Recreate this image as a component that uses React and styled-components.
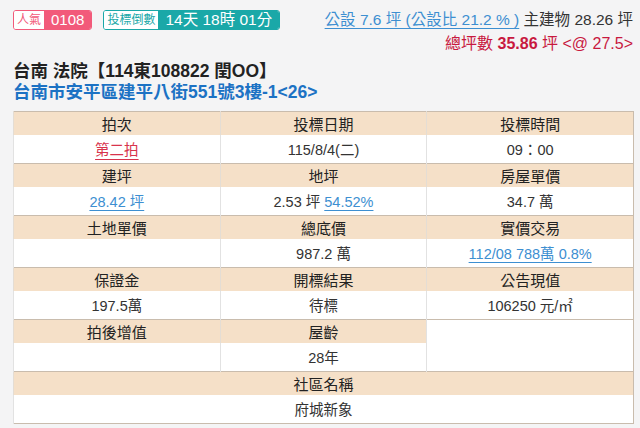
import React from 'react';
import styled, { createGlobalStyle } from 'styled-components';

const GlobalStyle = createGlobalStyle`
    body {
        margin: 0;
        background: #f4f4f5;
        font-family: "Liberation Sans", "Noto Sans CJK TC", sans-serif;
        color: #333;
    }
`;

const Page = styled.div`
    width: 640px;
    height: 428px;
    overflow: hidden;
    padding: 0 7px 0 13px;
    box-sizing: border-box;
`;

const TopBar = styled.div`
    display: flex;
    justify-content: space-between;
    align-items: flex-start;
    padding-top: 9px;
`;

const Badges = styled.div`
    display: flex;
    gap: 11px;
    padding-top: 1px;
`;

const Badge = styled.div`
    display: flex;
    height: 20px;
    border: 1px solid ${(p) => p.$color};
    border-radius: 3px;
    overflow: hidden;
    box-sizing: border-box;
`;

const BadgeLabel = styled.span`
    background: #fff;
    color: ${(p) => p.$color};
    font-size: 12px;
    line-height: 18px;
    padding: 0 3px;
    white-space: nowrap;
`;

const BadgeValue = styled.span`
    background: ${(p) => p.$color};
    color: #fff;
    font-size: ${(p) => p.$size || 15}px;
    line-height: 18px;
    padding: 0 ${(p) => p.$pad || 7}px;
    white-space: nowrap;
`;

const Summary = styled.div`
    text-align: right;
    font-size: 15.5px;
    line-height: 24px;
    margin-top: -1px;
    white-space: nowrap;
`;

const LinkText = styled.a`
    color: #3d8fd1;
    text-decoration: underline;
    text-underline-offset: 3px;
    cursor: pointer;
`;

const Total = styled.div`
    color: #c8193f;
    font-size: 16px;
    b {
        font-weight: 700;
    }
`;

const Title = styled.div`
    margin-top: 5px;
    font-size: 17.5px;
    font-weight: 700;
    color: #222;
    line-height: 21px;
    white-space: nowrap;
`;

const Address = styled(Title)`
    margin-top: 0;
    color: #1c72c4;
    margin-bottom: 8px;
`;

const Table = styled.table`
    width: 621px;
    border-collapse: collapse;
    table-layout: fixed;
    border: 1px solid #c9bcad;
    background: #fff;
    font-size: 14.5px;
`;

const HeadRow = styled.tr`
    background: #f5e0c8;
    height: 23px;
    border-top: 1px solid #c9bcad;
`;

const Head = styled.th`
    font-weight: 400;
    font-size: 15px;
    color: #222;
    padding: 0;
    border-left: 1px solid #e4ddd4;
`;

const ValueRow = styled.tr`
    height: 29px;
`;

const Cell = styled.td`
    text-align: center;
    padding: 0;
    color: #333;
    border-left: 1px solid #e2e2e2;
    background: #fff;
`;

const Red = styled.a`
    color: #d8334c;
    text-decoration: underline;
    text-underline-offset: 4px;
`;

export default function App() {
    return (
        <Page>
            <GlobalStyle />
            <TopBar>
                <Badges>
                    <Badge $color="#f25a7a">
                        <BadgeLabel $color="#f25a7a">人氣</BadgeLabel>
                        <BadgeValue $color="#f25a7a" $pad={7}>0108</BadgeValue>
                    </Badge>
                    <Badge $color="#1aa8a8">
                        <BadgeLabel $color="#1aa8a8">投標倒數</BadgeLabel>
                        <BadgeValue $color="#1aa8a8" $size={15.5} $pad={7}>14天 18時 01分</BadgeValue>
                    </Badge>
                </Badges>
                <Summary>
                    <div>
                        <LinkText>公設 7.6 坪 (公設比 21.2 % )</LinkText> 主建物 28.26 坪
                    </div>
                    <Total>
                        總坪數 <b>35.86</b> 坪 &lt;@ 27.5&gt;
                    </Total>
                </Summary>
            </TopBar>
            <Title>台南 法院【114東108822 閏OO】</Title>
            <Address>台南市安平區建平八街551號3樓-1&lt;26&gt;</Address>
            <Table>
                <tbody>
                    <HeadRow>
                        <Head>拍次</Head>
                        <Head>投標日期</Head>
                        <Head>投標時間</Head>
                    </HeadRow>
                    <ValueRow>
                        <Cell><Red>第二拍</Red></Cell>
                        <Cell>115/8/4(二)</Cell>
                        <Cell>09：00</Cell>
                    </ValueRow>
                    <HeadRow>
                        <Head>建坪</Head>
                        <Head>地坪</Head>
                        <Head>房屋單價</Head>
                    </HeadRow>
                    <ValueRow>
                        <Cell><LinkText>28.42 坪</LinkText></Cell>
                        <Cell>2.53 坪 <LinkText>54.52%</LinkText></Cell>
                        <Cell>34.7 萬</Cell>
                    </ValueRow>
                    <HeadRow>
                        <Head>土地單價</Head>
                        <Head>總底價</Head>
                        <Head>實價交易</Head>
                    </HeadRow>
                    <ValueRow>
                        <Cell></Cell>
                        <Cell>987.2 萬</Cell>
                        <Cell><LinkText>112/08 788萬 0.8%</LinkText></Cell>
                    </ValueRow>
                    <HeadRow>
                        <Head>保證金</Head>
                        <Head>開標結果</Head>
                        <Head>公告現值</Head>
                    </HeadRow>
                    <ValueRow>
                        <Cell>197.5萬</Cell>
                        <Cell>待標</Cell>
                        <Cell>106250 元/㎡</Cell>
                    </ValueRow>
                    <HeadRow>
                        <Head>拍後增值</Head>
                        <Head>屋齡</Head>
                        <Cell rowSpan={2}></Cell>
                    </HeadRow>
                    <ValueRow>
                        <Cell></Cell>
                        <Cell>28年</Cell>
                    </ValueRow>
                    <HeadRow>
                        <Head colSpan={3}>社區名稱</Head>
                    </HeadRow>
                    <ValueRow>
                        <Cell colSpan={3}>府城新象</Cell>
                    </ValueRow>
                </tbody>
            </Table>
        </Page>
    );
}
